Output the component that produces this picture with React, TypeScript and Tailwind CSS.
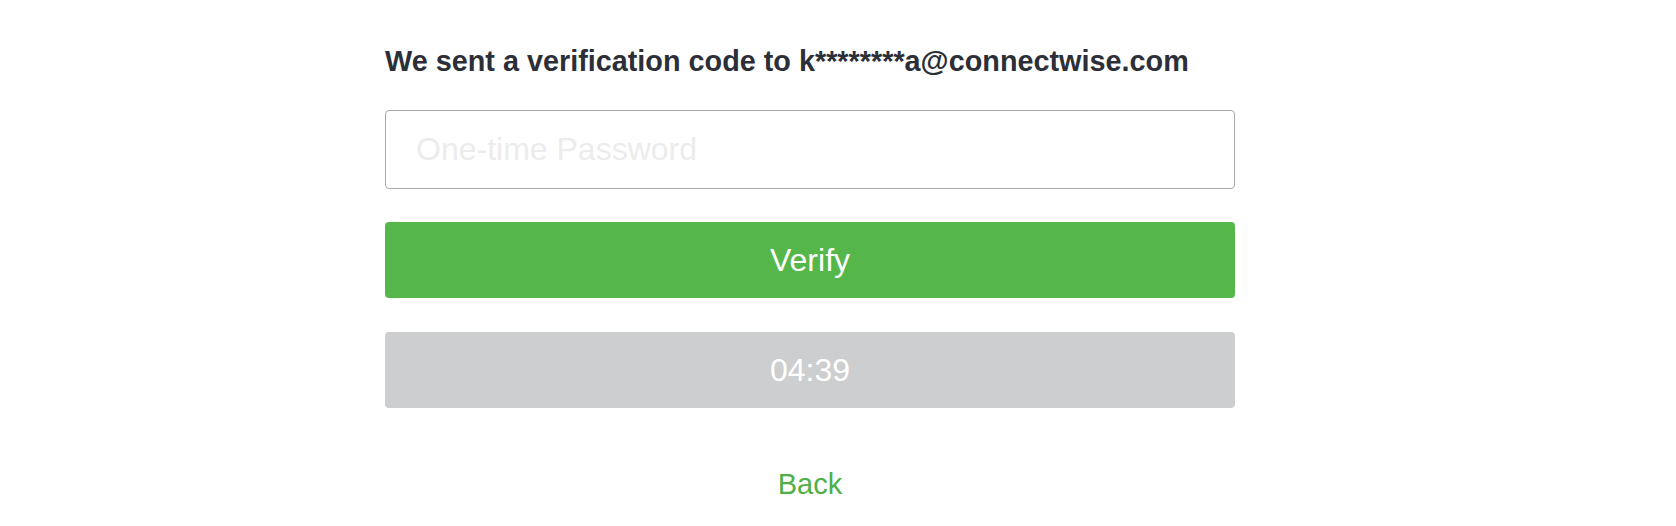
export default function App() {
  return (
    <div className="min-h-[526px] w-full bg-white font-['Liberation_Sans',Arial,sans-serif]">
      <div className="ml-[385px] flex w-[850px] flex-col pt-[43px]">
        <h1 className="text-[28.8px] font-bold leading-[37px] text-[#2c2f38]">
          We sent a verification code to k********a@connectwise.com
        </h1>
        <input
          type="text"
          placeholder="One-time Password"
          className="mt-[30px] h-[79px] w-full rounded-[4px] border border-[#a9a9a9] px-[30px] text-[32px] text-[#333] outline-none placeholder:text-[#ececec]"
        />
        <button className="mt-[33px] h-[76px] w-full rounded-[4px] bg-[#55b74a] text-[32px] text-white">
          Verify
        </button>
        <button
          disabled
          className="mt-[34px] h-[76px] w-full rounded-[4px] bg-[#cdcecf] text-[32px] text-white"
        >
          04:39
        </button>
        <a href="#" className="mt-[58px] self-center text-[29px] leading-[36px] text-[#4fb047]">
          Back
        </a>
      </div>
    </div>
  )
}
